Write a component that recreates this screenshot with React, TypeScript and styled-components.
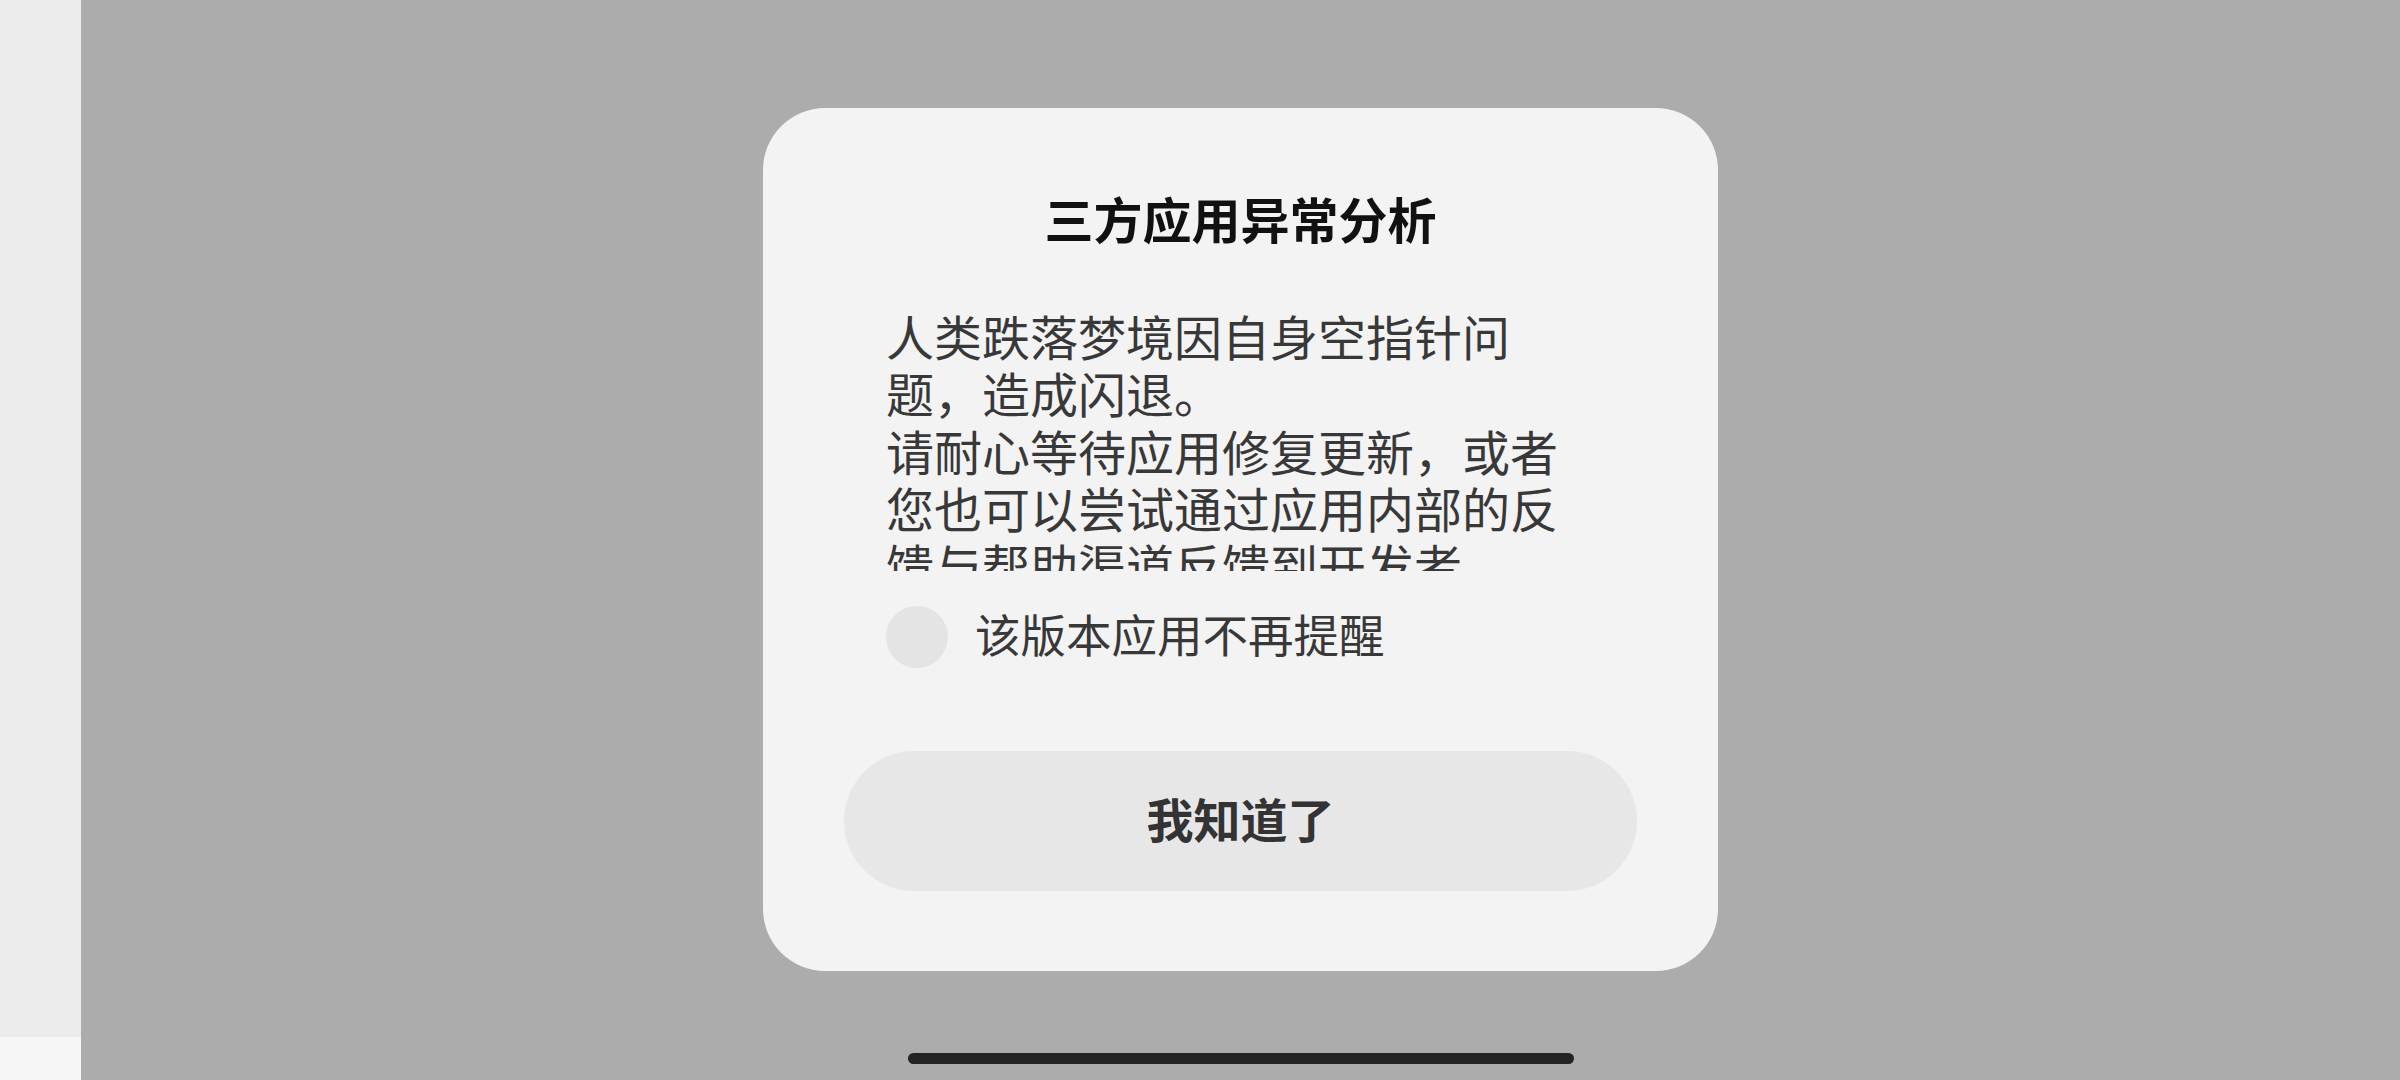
import React from "react";
import styled, { createGlobalStyle } from "styled-components";

const Global = createGlobalStyle`
  html, body { margin: 0; padding: 0; }
  body {
    width: 2400px;
    height: 1080px;
    overflow: hidden;
    font-family: "Noto Sans CJK SC", "Noto Sans", sans-serif;
    background: #acacac;
  }
  #root { width: 2400px; height: 1080px; }
`;

const Screen = styled.div`
  display: flex;
  width: 2400px;
  height: 1080px;
`;

const SideStrip = styled.div`
  width: 81px;
  display: flex;
  flex-direction: column;
`;

const SideTop = styled.div`
  flex: 1;
  background: #ebebeb;
`;

const SideBottom = styled.div`
  height: 43px;
  background: #f6f6f6;
`;

const Stage = styled.div`
  flex: 1;
  display: flex;
  flex-direction: column;
  align-items: center;
  padding-top: 108px;
  background: #acacac;
`;

const Dialog = styled.div`
  width: 955px;
  box-sizing: border-box;
  background: #f3f3f3;
  border-radius: 62px;
  padding: 80px 81px 80px;
  display: flex;
  flex-direction: column;
`;

const Title = styled.h2`
  margin: 0;
  text-align: center;
  font-size: 49px;
  line-height: 59px;
  font-weight: 700;
  color: #111;
`;

const Body = styled.div`
  margin: 60px 42px 0;
  height: 264px;
  overflow: hidden;
`;

const Para = styled.p`
  margin: 0;
  font-size: 48px;
  line-height: 57.3px;
  color: #383838;
`;

const CheckRow = styled.label`
  margin: 35px 42px 0;
  height: 62px;
  display: flex;
  align-items: center;
  gap: 27px;
`;

const Circle = styled.span`
  width: 62px;
  height: 62px;
  border-radius: 50%;
  background: #e4e4e4;
  flex: none;
`;

const CheckText = styled.span`
  font-size: 45.5px;
  line-height: 54px;
  padding-bottom: 8px;
  color: #383838;
`;

const ActionButton = styled.button`
  margin-top: 83px;
  height: 140px;
  border: none;
  border-radius: 70px;
  background: #e7e7e7;
  font-family: "Noto Sans CJK SC", sans-serif;
  font-size: 47px;
  font-weight: 700;
  color: #333;
  padding: 0 0 8px;
  cursor: pointer;
`;

const Spacer = styled.div`
  flex: 1;
`;

const HomeBar = styled.div`
  width: 666px;
  height: 11px;
  border-radius: 6px;
  background: #232323;
  margin-bottom: 16px;
`;

export default function App() {
  return (
    <>
      <Global />
      <Screen>
        <SideStrip>
          <SideTop />
          <SideBottom />
        </SideStrip>
        <Stage>
          <Dialog lang="zh-CN">
            <Title>三方应用异常分析</Title>
            <Body>
              <Para>人类跌落梦境因自身空指针问题，造成闪退。</Para>
              <Para>
                请耐心等待应用修复更新，或者您也可以尝试通过应用内部的反馈与帮助渠道反馈到开发者。
              </Para>
            </Body>
            <CheckRow>
              <Circle />
              <CheckText>该版本应用不再提醒</CheckText>
            </CheckRow>
            <ActionButton>我知道了</ActionButton>
          </Dialog>
          <Spacer />
          <HomeBar />
        </Stage>
      </Screen>
    </>
  );
}
